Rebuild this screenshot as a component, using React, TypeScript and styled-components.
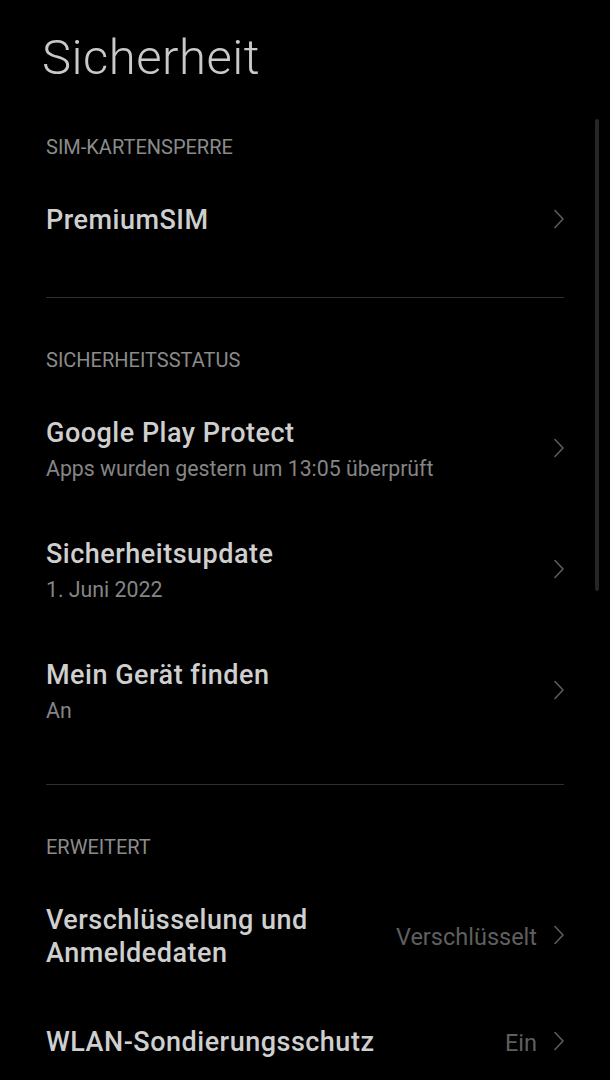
import React from 'react';
import styled, { createGlobalStyle } from 'styled-components';

const GlobalStyle = createGlobalStyle`
  html, body {
    margin: 0;
    padding: 0;
    background: #000;
  }
  body {
    font-family: Roboto, "Liberation Sans", sans-serif;
    -webkit-font-smoothing: antialiased;
  }
`;

const Screen = styled.div`
  position: relative;
  width: 610px;
  min-height: 1080px;
  overflow: hidden;
  background: #000;
  padding: 0 46px;
  box-sizing: border-box;
`;

const Title = styled.h1`
  margin: 0 0 0 -4px;
  padding-top: 31px;
  font-size: 49px;
  line-height: 54px;
  font-weight: 300;
  letter-spacing: 0.5px;
  color: #c9c9c9;
`;

const ScrollBar = styled.div`
  position: absolute;
  top: 119px;
  right: 11px;
  width: 4px;
  height: 472px;
  border-radius: 2px;
  background: #262626;
`;

const Section = styled.section``;

const SectionHeader = styled.div`
  padding: 50px 0 17px;
  font-size: 20px;
  line-height: 24px;
  font-weight: 400;
  color: #8b8b8b;
  text-transform: uppercase;
`;

const Item = styled.div<{ $hasSub: boolean }>`
  display: flex;
  align-items: center;
  gap: 16px;
  padding: 28px 0 ${props => (props.$hasSub ? '27px' : '28px')};
`;

const Texts = styled.div`
  flex: 1;
  min-width: 0;
`;

const ItemTitle = styled.div`
  font-size: 27px;
  line-height: 33px;
  font-weight: 500;
  color: #cfcfcf;
  letter-spacing: 0.5px;
`;

const ItemSub = styled.div`
  margin-top: 5px;
  font-size: 21.3px;
  line-height: 28px;
  font-weight: 400;
  color: #858585;
`;

const Value = styled.span`
  font-size: 23.5px;
  line-height: 28px;
  color: #5f5f5f;
`;

const Chevron = styled.svg`
  flex: none;
  width: 12px;
  height: 20px;
  margin: 0 -1px 4px 0;
`;

const Divider = styled.hr`
  margin: 32px 0 0;
  border: 0;
  height: 1px;
  background: #2e2e2e;
`;

const Arrow = () => (
  <Chevron viewBox="0 0 12 20">
    <path d="M2 1.5 L10 10 L2 18.5" fill="none" stroke="#5c5c5c" strokeWidth="1.6" strokeLinecap="round" strokeLinejoin="round" />
  </Chevron>
);

type Row = { title: string; sub?: string; value?: string };

const SettingItem = ({ title, sub, value }: Row) => (
  <Item $hasSub={!!sub}>
    <Texts>
      <ItemTitle>{title}</ItemTitle>
      {sub && <ItemSub>{sub}</ItemSub>}
    </Texts>
    {value && <Value>{value}</Value>}
    <Arrow />
  </Item>
);

const sections: { header: string; rows: Row[]; divider: boolean }[] = [
  { header: 'SIM-Kartensperre', rows: [{ title: 'PremiumSIM' }], divider: true },
  {
    header: 'Sicherheitsstatus',
    rows: [
      { title: 'Google Play Protect', sub: 'Apps wurden gestern um 13:05 überprüft' },
      { title: 'Sicherheitsupdate', sub: '1. Juni 2022' },
      { title: 'Mein Gerät finden', sub: 'An' },
    ],
    divider: true,
  },
  {
    header: 'Erweitert',
    rows: [
      { title: 'Verschlüsselung und Anmeldedaten', value: 'Verschlüsselt' },
      { title: 'WLAN-Sondierungsschutz', value: 'Ein' },
    ],
    divider: false,
  },
];

const App = () => (
  <>
    <GlobalStyle />
    <Screen>
      <Title>Sicherheit</Title>
      {sections.map(section => (
        <Section key={section.header}>
          <SectionHeader>{section.header}</SectionHeader>
          {section.rows.map(row => (
            <SettingItem key={row.title} {...row} />
          ))}
          {section.divider && <Divider />}
        </Section>
      ))}
      <ScrollBar />
    </Screen>
  </>
);

export default App;
